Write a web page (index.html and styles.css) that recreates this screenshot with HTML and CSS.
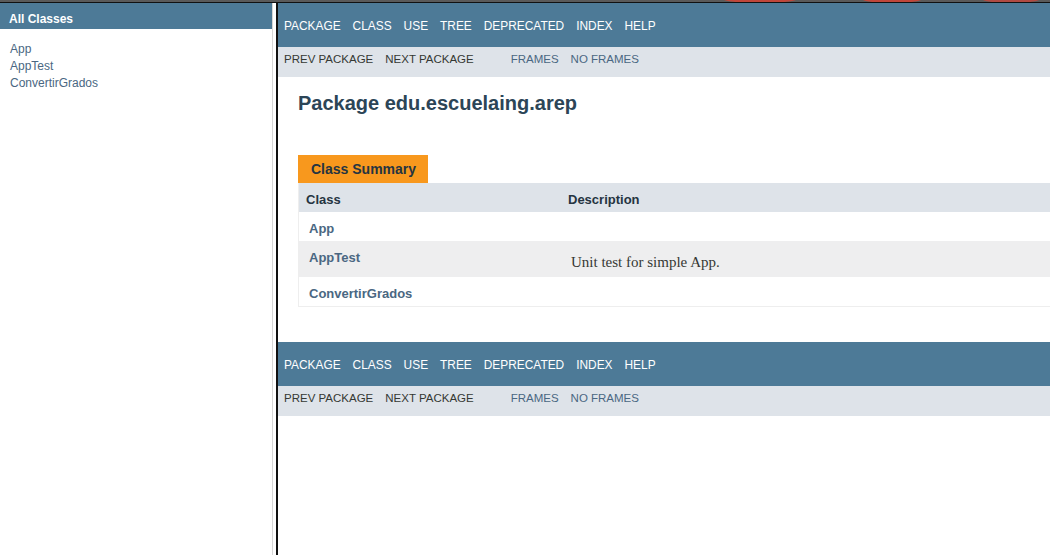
FILE: index.html
```html
<!DOCTYPE html>
<html lang="en">
<head>
<meta charset="utf-8">
<title>edu.escuelaing.arep</title>
<link rel="stylesheet" href="styles.css">
</head>
<body>
<div class="strip">
  <span class="blob blob-a"></span>
  <span class="blob blob-b"></span>
  <span class="blob blob-c"></span>
</div>
<div class="frames">
  <div class="left-frame">
    <h1 class="bar">All Classes</h1>
    <ul class="class-list">
      <li><a href="#">App</a></li>
      <li><a href="#">AppTest</a></li>
      <li><a href="#">ConvertirGrados</a></li>
    </ul>
  </div>
  <div class="divider"></div>
  <div class="right-frame">
    <div class="top-nav">
      <ul class="nav-list">
        <li>Package</li>
        <li>Class</li>
        <li>Use</li>
        <li>Tree</li>
        <li>Deprecated</li>
        <li>Index</li>
        <li>Help</li>
      </ul>
    </div>
    <div class="sub-nav">
      <ul class="nav-list sub-list">
        <li>Prev Package</li>
        <li>Next Package</li>
      </ul>
      <ul class="nav-list">
        <li><a href="#">Frames</a></li>
        <li><a href="#">No Frames</a></li>
      </ul>
    </div>
    <div class="content">
      <h1 class="title">Package edu.escuelaing.arep</h1>
      <div class="caption">Class Summary</div>
      <table class="summary">
        <colgroup><col class="col-first"><col></colgroup>
        <thead>
          <tr><th>Class</th><th>Description</th></tr>
        </thead>
        <tbody>
          <tr class="row"><td class="first"><a href="#">App</a></td><td></td></tr>
          <tr class="alt"><td class="first"><a href="#">AppTest</a></td><td><div class="block">Unit test for simple App.</div></td></tr>
          <tr class="row"><td class="first"><a href="#">ConvertirGrados</a></td><td></td></tr>
        </tbody>
      </table>
    </div>
    <div class="top-nav">
      <ul class="nav-list">
        <li>Package</li>
        <li>Class</li>
        <li>Use</li>
        <li>Tree</li>
        <li>Deprecated</li>
        <li>Index</li>
        <li>Help</li>
      </ul>
    </div>
    <div class="sub-nav">
      <ul class="nav-list sub-list">
        <li>Prev Package</li>
        <li>Next Package</li>
      </ul>
      <ul class="nav-list">
        <li><a href="#">Frames</a></li>
        <li><a href="#">No Frames</a></li>
      </ul>
    </div>
  </div>
</div>
</body>
</html>
```
FILE: styles.css
```css
html, body {
  margin: 0;
  padding: 0;
  height: 555px;
  overflow: hidden;
  background: #ffffff;
  font-family: "Liberation Sans", Arial, sans-serif;
  color: #353833;
}

a {
  color: #4a6782;
  text-decoration: none;
}

ul {
  list-style: none;
  margin: 0;
  padding: 0;
}

.strip {
  position: relative;
  height: 2px;
  background: #5a5a5a;
  border-bottom: 1px solid #111111;
  overflow: hidden;
}

.blob {
  position: absolute;
  top: -5px;
  height: 8px;
  background: #c0463a;
  border-radius: 50%;
}

.blob-a { left: 723px; width: 74px; }
.blob-b { left: 862px; width: 60px; }
.blob-c { left: 982px; width: 58px; background: #b04a42; }

.frames {
  display: flex;
  height: 552px;
}

.left-frame {
  width: 272px;
  flex: none;
  background: #ffffff;
}

.bar {
  margin: 0;
  height: 26px;
  box-sizing: border-box;
  padding: 9px 0 3px 9px;
  background: #4d7a97;
  color: #ffffff;
  font-size: 12px;
  line-height: 14px;
  font-weight: bold;
}

.class-list {
  padding: 12px 0 0 10px;
  font-size: 12px;
  line-height: 17px;
}

.divider {
  flex: none;
  width: 3px;
  background: #ffffff;
  border-left: 1px solid #d6d6d6;
  border-right: 2px solid #111111;
}

.right-frame {
  flex: 1;
  min-width: 0;
  overflow: hidden;
}

.top-nav {
  height: 44px;
  box-sizing: border-box;
  padding-top: 16px;
  background: #4d7a97;
  color: #ffffff;
  font-size: 11.9px;
  line-height: 14px;
  text-transform: uppercase;
}

.nav-list {
  display: flex;
}

.nav-list li {
  padding: 0 6px;
}

.sub-nav {
  display: flex;
  height: 30px;
  box-sizing: border-box;
  padding-top: 5px;
  background: #dee3e9;
  font-size: 11.5px;
  line-height: 14px;
  text-transform: uppercase;
  color: #353833;
}

.sub-list {
  margin-right: 25px;
}

.content {
  padding: 15px 0 35px 20px;
}

.title {
  margin: 0 0 40px;
  font-size: 20px;
  line-height: 23px;
  font-weight: bold;
  color: #2c4557;
}

.caption {
  display: inline-block;
  height: 28px;
  box-sizing: border-box;
  padding: 6px 12px 6px 13px;
  background: #f8981d;
  color: #253441;
  font-size: 14px;
  line-height: 16px;
  font-weight: bold;
  vertical-align: top;
}

.summary {
  width: 100%;
  table-layout: fixed;
  border-collapse: separate;
  border-spacing: 0;
  border-left: 1px solid #eeeeee;
  border-bottom: 1px solid #eeeeee;
  font-size: 13px;
}

.col-first {
  width: 262px;
}

.summary th {
  text-align: left;
  background: #dee3e9;
  color: #253441;
  font-weight: bold;
  line-height: 15px;
  padding: 9px 3px 5px 7px;
}

.summary td {
  vertical-align: top;
  padding: 9px 3px 4px 10px;
  line-height: 16px;
}

.summary td.first {
  padding-left: 10px;
  font-weight: bold;
}

.row {
  background: #ffffff;
}

.alt {
  background: #eeeeef;
}

.block {
  margin: 4px 0 3px;
  font-family: "Liberation Serif", Georgia, serif;
  font-size: 15px;
  line-height: 16px;
  color: #353833;
}
```
